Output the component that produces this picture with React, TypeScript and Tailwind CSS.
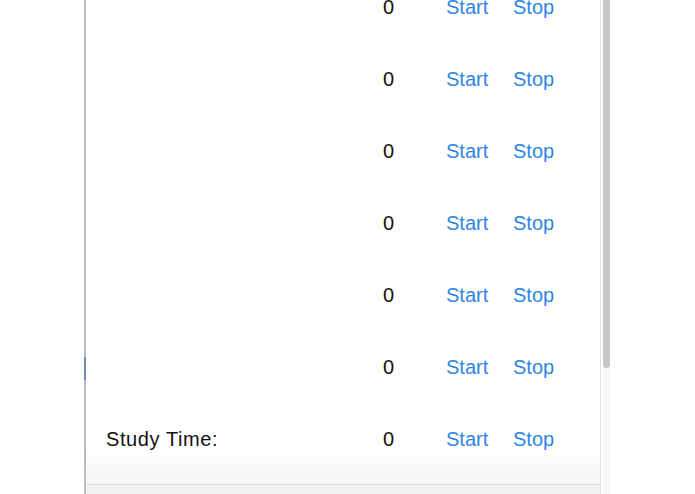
const rows = ['', '', '', '', '', '', 'Study Time:'];

const TimerRow = ({ label }: { label: string }) => (
  <div className="grid h-[72px] shrink-0 grid-cols-[277px_63px_67px_auto] items-center pl-[20px]">
    <span className="tracking-[0.6px] text-[#111]">{label}</span>
    <span className="text-[#111]">0</span>
    <button type="button" className="text-left text-[#2e86e4]">
      Start
    </button>
    <button type="button" className="text-left text-[#2e86e4]">
      Stop
    </button>
  </div>
);

export default function App() {
  return (
    <div className="flex h-[494px] w-[695px] overflow-hidden bg-white font-['Liberation_Sans',Arial,sans-serif] text-[20px] leading-none">
      <div className="w-[84px] shrink-0" />

      {/* window edge */}
      <div className="flex w-[2px] shrink-0 flex-col">
        <div className="h-[357px] bg-[#bcbcbc]" />
        <div className="h-[23px] bg-[#6f8db3]" />
        <div className="flex-1 bg-[#bcbcbc]" />
      </div>

      <section className="flex w-[515px] shrink-0 flex-col border-r border-[#e2e2e2]">
        <div className="flex flex-1 flex-col overflow-hidden bg-linear-to-b from-white from-[93%] to-[#f5f5f5]">
          <div className="-mt-[29px] flex flex-col">
            {rows.map((label, i) => (
              <TimerRow key={i} label={label} />
            ))}
          </div>
        </div>
        <div className="h-[10px] shrink-0 border-t border-[#dcdcdc] bg-[#f1f1f1]" />
      </section>

      {/* scrollbar */}
      <div className="ml-[2px] flex w-[7px] shrink-0 flex-col">
        <div className="h-[368px] rounded-b-[3px] bg-[#c6c6c6]" />
        <div className="flex-1 bg-[#f7f7f7]" />
      </div>
    </div>
  );
}
